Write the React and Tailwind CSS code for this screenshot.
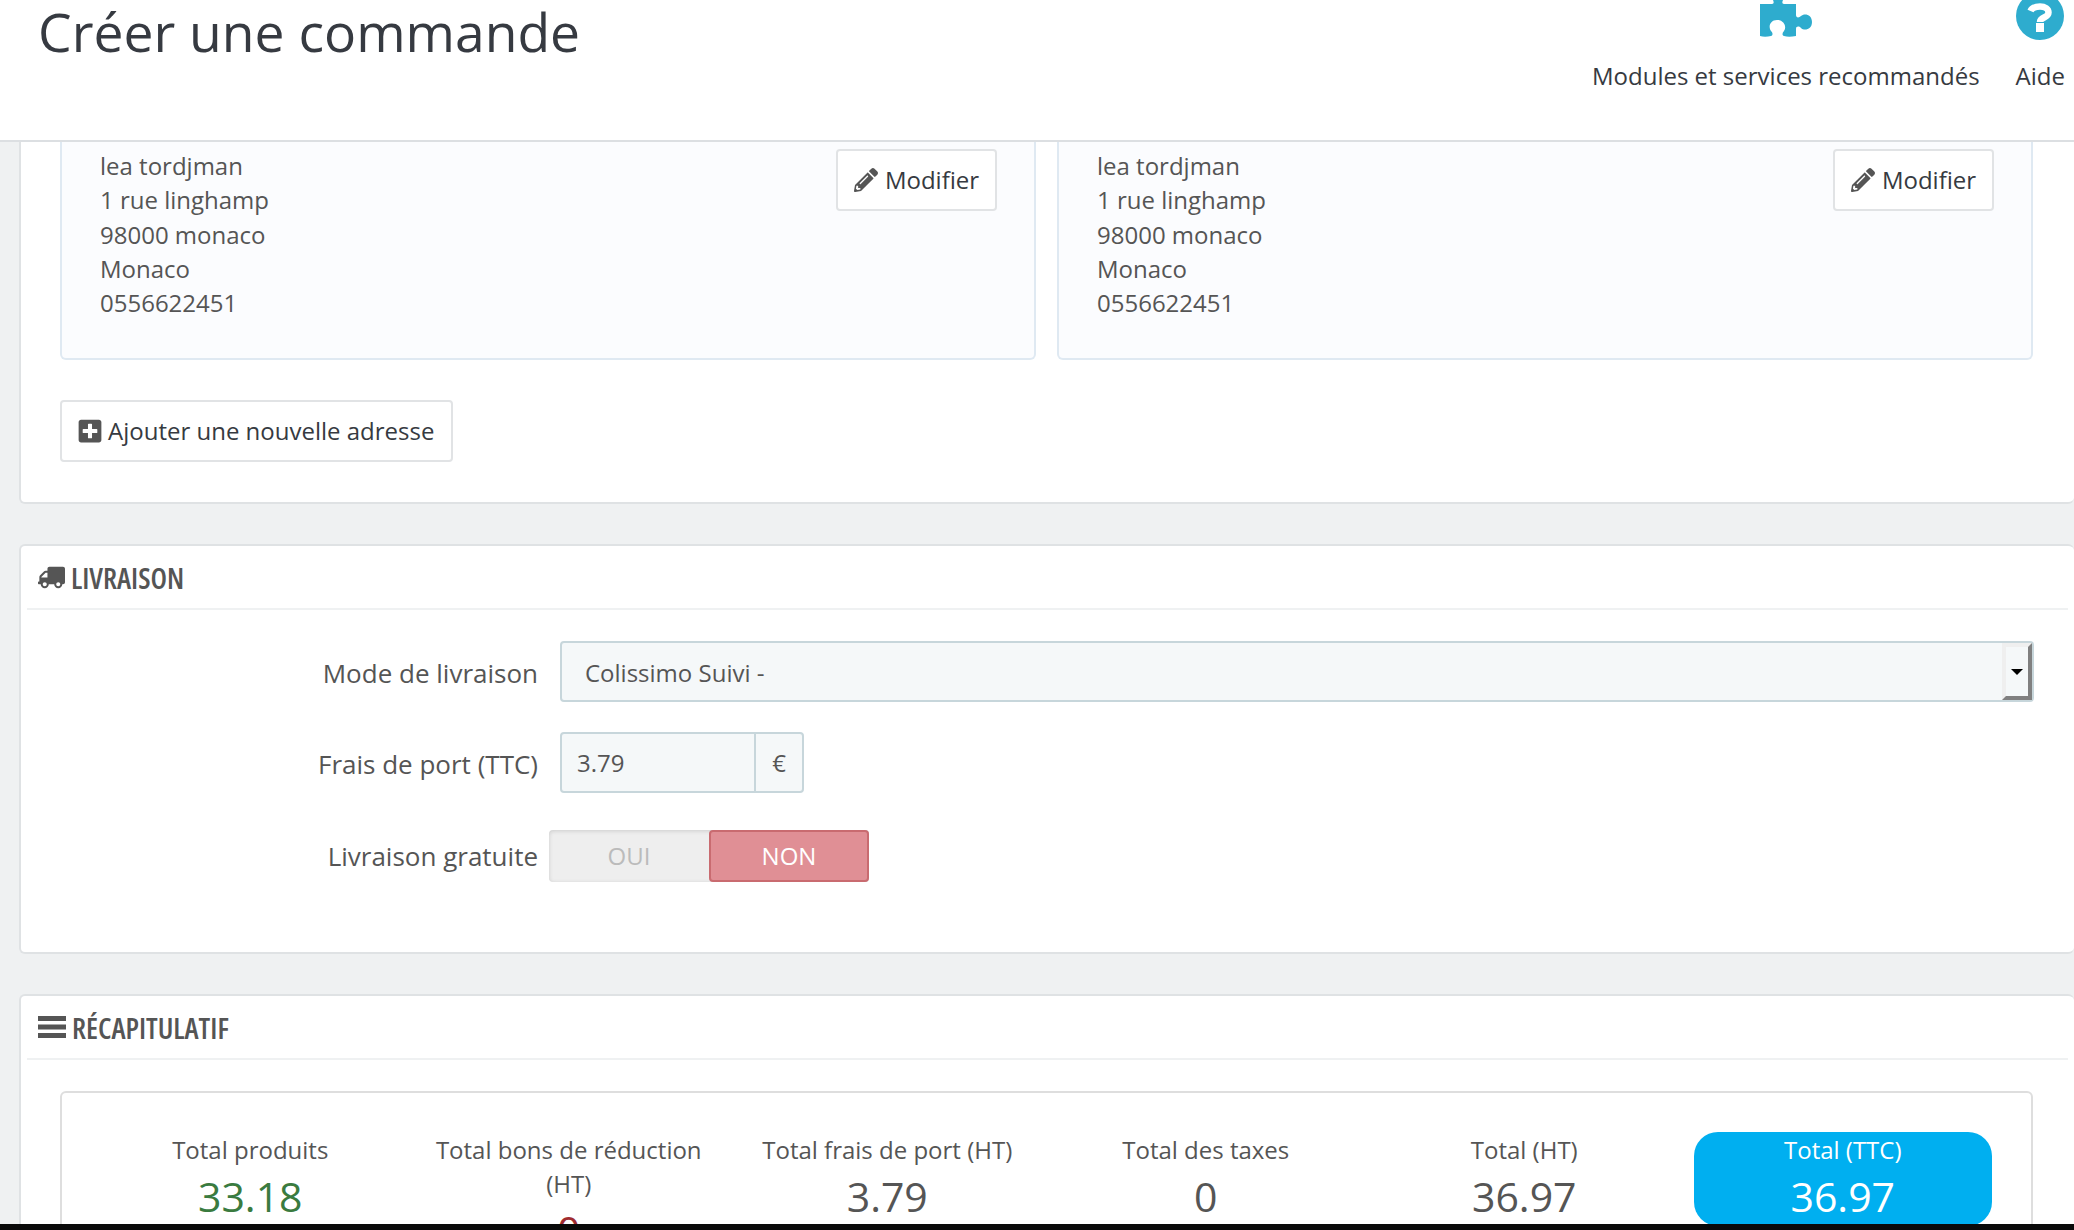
import React from 'react';
import { FaPencilAlt, FaPlusSquare, FaTruck } from 'react-icons/fa';

const address = ['lea tordjman', '1 rue linghamp', '98000 monaco', 'Monaco', '0556622451'];

const totals = [
    { label: 'Total produits', value: '33.18', color: 'text-[#3a7b3f]' },
    { label: 'Total bons de réduction (HT)', value: '0', color: 'text-[#a12c30]' },
    { label: 'Total frais de port (HT)', value: '3.79', color: 'text-[#555]' },
    { label: 'Total des taxes', value: '0', color: 'text-[#555]' },
    { label: 'Total (HT)', value: '36.97', color: 'text-[#555]' },
];

const PuzzleIcon = () => (
    <svg width="52" height="37" viewBox="0 0 52 37" className="mb-[3px]" fill="#2eacce">
        <path d="M0 4 H12 C14 4 14 2 13 0 H23 C22 2 22 4 24 4 H36 V15 C36 18 39 18 41 16 C44 13 52 14 52 22 C52 30 44 31 41 28 C39 26 36 26 36 29 V36 C31 37 27 37 24 36 C22 35 22 33 24 31 C27 27 24 20 17 20 C10 20 8 27 11 31 C13 33 13 35 11 36 C7 37 3 37 0 36 Z" />
    </svg>
);

const HelpIcon = () => (
    <svg width="48" height="48" viewBox="0 0 48 48" className="shrink-0">
        <circle cx="24" cy="24" r="24" fill="#2eacce" />
        <path d="M14.5 19 C16 15.5 20 14.5 24 14.5 C29 14.5 32.5 17 32.5 20.5 C32.5 26 24 25 24 30" fill="none" stroke="#fff" strokeWidth="6.5" />
        <rect x="20" y="31" width="8" height="9" fill="#fff" />
    </svg>
);

const BarsIcon = () => (
    <svg width="28" height="22" viewBox="0 0 28 22" fill="#555">
        <rect width="28" height="5" />
        <rect y="8.5" width="28" height="5" />
        <rect y="17" width="28" height="5" />
    </svg>
);

const ActionButton = ({ children, className }) => (
    <button className={`flex h-[62px] items-center rounded-[4px] border-2 border-[#e1e3e5] bg-white text-[24px] text-[#363a41] ${className}`}>
        {children}
    </button>
);

const AddressCard = () => (
    <div className="flex items-start justify-between rounded-b-[6px] border-2 border-t-0 border-[#dfe9f2] bg-[#fbfcfe] pb-[38px] pl-[38px] pr-[37px] pt-[7px]">
        <div className="text-[24px] leading-[34.3px] text-[#555]">
            {address.map((line) => (
                <div key={line}>{line}</div>
            ))}
        </div>
        <ActionButton className="w-[161px] justify-center gap-[7px]">
            <FaPencilAlt className="text-[24px] text-[#555]" />
            Modifier
        </ActionButton>
    </div>
);

const PanelHeader = ({ icon, title }) => (
    <div className="mx-[6px] flex h-[64px] items-center gap-[6px] border-b-2 border-[#eff1f2] pl-[11px]">
        {icon}
        <span className="text-[29px] font-semibold uppercase text-[#555] [font-stretch:75%]">{title}</span>
    </div>
);

const FormRow = ({ label, children, className, labelClass }) => (
    <div className={`flex items-center ${className}`}>
        <label className={`w-[517px] text-right text-[26px] text-[#555] ${labelClass}`}>{label}</label>
        {children}
    </div>
);

const App = () => {
    return (
        <div className="flex h-[1230px] w-full flex-col overflow-hidden bg-[#eff1f2] font-['Open_Sans',sans-serif]">
            <header className="flex h-[142px] shrink-0 items-start justify-between border-b-2 border-[#dcdfe2] bg-white pl-[38px] pr-[9px]">
                <h1 className="mt-[-3px] text-[53.4px] font-normal leading-[70px] text-[#363a41]">Créer une commande</h1>
                <div className="flex gap-[36px] text-[24px] leading-[34px] text-[#363a41]">
                    <div className="flex flex-col items-center">
                        <div className="flex h-[40px] items-end">
                            <PuzzleIcon />
                        </div>
                        <span className="mt-[19px]">Modules et services recommandés</span>
                    </div>
                    <div className="flex flex-col items-center">
                        <div className="flex h-[40px] items-end">
                            <HelpIcon />
                        </div>
                        <span className="mt-[19px]">Aide</span>
                    </div>
                </div>
            </header>

            <main className="min-h-0 flex-1 overflow-hidden pl-[19px]">
                <section className="rounded-b-[6px] border-2 border-t-0 border-r-0 border-[#dfe2e4] bg-white pb-[40px] pl-[39px] pr-[41px]">
                    <div className="grid grid-cols-2 gap-[21px]">
                        <AddressCard />
                        <AddressCard />
                    </div>
                    <ActionButton className="mt-[40px] w-[393px] gap-[5px] pl-[15px]">
                        <FaPlusSquare className="text-[26px] text-[#555]" />
                        Ajouter une nouvelle adresse
                    </ActionButton>
                </section>

                <section className="mt-[40px] rounded-l-[6px] rounded-r-[6px] border-2 border-r-0 border-[#dfe2e4] bg-white pb-[70px]">
                    <PanelHeader icon={<FaTruck className="-scale-x-100 text-[27px] text-[#555]" />} title="Livraison" />
                    <div className="pr-[40px] pt-[31px]">
                        <FormRow label="Mode de livraison" labelClass="pt-[3px]">
                            <div className="ml-[22px] flex h-[61px] flex-1 items-center justify-between rounded-[4px] border-2 border-[#c7d6db] bg-[#f5f8f9] pl-[23px] text-[24px] text-[#555]">
                                <span className="pt-[2px]">Colissimo Suivi -</span>
                                <div className="flex h-full w-[30px] items-center justify-center border-4 border-[#efefef] border-b-[#808080] border-r-[#808080]">
                                    <div className="h-0 w-0 border-x-[6px] border-t-[6px] border-x-transparent border-t-black" />
                                </div>
                            </div>
                        </FormRow>
                        <FormRow label="Frais de port (TTC)" className="mt-[30px]" labelClass="pt-[4px]">
                            <div className="ml-[22px] flex h-[61px] w-[244px] items-center rounded-[4px] border-2 border-[#c7d6db] bg-[#f5f8f9] text-[24px] text-[#555]">
                                <span className="flex h-full w-[194px] items-center border-r-2 border-[#c7d6db] pl-[15px]">3.79</span>
                                <span className="flex-1 text-center">€</span>
                            </div>
                        </FormRow>
                        <FormRow label="Livraison gratuite" className="mt-[37px]">
                            <div className="ml-[11px] flex h-[52px] w-[320px] rounded-[4px] bg-[#eeeeee] text-[24px] font-medium shadow-[inset_0_1px_4px_rgba(0,0,0,0.15)]">
                                <span className="flex flex-1 items-center justify-center text-[#bbbbbb]">OUI</span>
                                <span className="flex w-[160px] items-center justify-center rounded-[4px] border-2 border-[#c96b70] bg-[#e08f95] text-white">NON</span>
                            </div>
                        </FormRow>
                    </div>
                </section>

                <section className="mt-[40px] rounded-l-[6px] rounded-tr-[6px] border-2 border-r-0 border-[#dfe2e4] bg-white pb-[40px] pl-[39px] pr-[41px]">
                    <div className="-ml-[39px] -mr-[41px]">
                        <PanelHeader icon={<BarsIcon />} title="Récapitulatif" />
                    </div>
                    <div className="mt-[31px] rounded-[6px] border-2 border-[#dedede] bg-white px-[29px] pt-[39px]">
                        <div className="grid grid-cols-6 items-start text-center text-[24px] leading-[34px] text-[#555]">
                            {totals.map((item) => (
                                <div key={item.label} className="px-3 pt-[1px]">
                                    <div>{item.label}</div>
                                    <div className={`text-[41px] leading-[58px] ${item.color}`}>{item.value}</div>
                                </div>
                            ))}
                            <div className="mx-[10px] rounded-[24px] bg-[#00aff0] pb-px pt-[1px] text-white">
                                <div>Total (TTC)</div>
                                <div className="text-[41px] leading-[58px]">36.97</div>
                            </div>
                        </div>
                    </div>
                </section>
            </main>

            <div className="h-[6px] shrink-0 bg-[#0a0a0a]" />
        </div>
    );
};

export default App;
